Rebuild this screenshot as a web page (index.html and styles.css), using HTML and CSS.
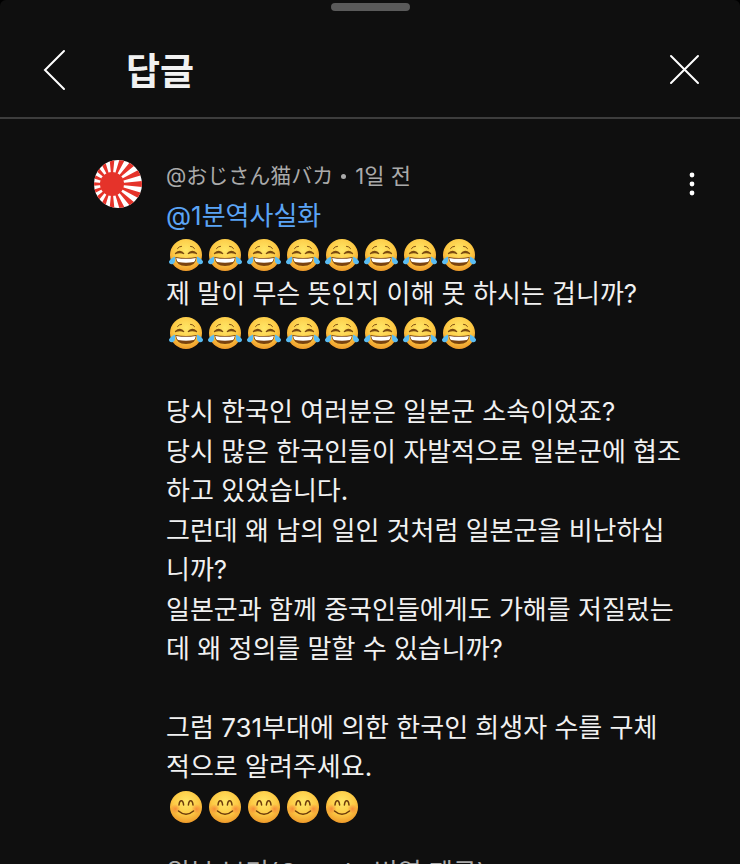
FILE: index.html
```html
<!DOCTYPE html>
<html lang="ko">
<head>
  <meta charset="UTF-8">
  <meta name="viewport" content="width=device-width, initial-scale=1.0">
  <title>답글</title>
  <link rel="stylesheet" href="styles.css">
</head>
<body>
  <svg class="sprites" aria-hidden="true">
    <defs>
      <radialGradient id="face" cx="50%" cy="35%" r="65%">
        <stop offset="0" stop-color="#ffe768"/>
        <stop offset="0.6" stop-color="#fdca45"/>
        <stop offset="1" stop-color="#ee9a2a"/>
      </radialGradient>
      <radialGradient id="blush">
        <stop offset="0" stop-color="#f57a35" stop-opacity="0.75"/>
        <stop offset="1" stop-color="#f57a35" stop-opacity="0"/>
      </radialGradient>
      <symbol id="joy" viewBox="0 0 36 36">
        <circle cx="18" cy="18" r="16" fill="url(#face)"/>
        <g fill="none" stroke="#7a4a10" stroke-width="1.3" stroke-linecap="round">
          <path d="M9.5 11.5 Q11 9.3 13.5 9.3" stroke-width="1"/>
          <path d="M26.5 11.5 Q25 9.3 22.5 9.3" stroke-width="1"/>
          <path d="M7.5 16.5 Q12 12 16 16.8 Q12.5 14.8 7.5 16.5"/>
          <path d="M28.5 16.5 Q24 12 20 16.8 Q23.5 14.8 28.5 16.5"/>
        </g>
        <path d="M7.3 20 Q18 22 28.7 20 Q28 29 18 29 Q8 29 7.3 20Z" fill="#7a430f"/>
        <path d="M8.2 20.9 Q18 22.8 27.8 20.9 Q27.4 24 25.8 25 Q18 26.4 10.2 25 Q8.6 24 8.2 20.9Z" fill="#fff"/>
        <path d="M7 19.5 Q8 26 4.5 27.3 Q1 27.8 1 24.6 Q1.8 22.2 7 19.5Z" fill="#5bbcf2"/>
        <path d="M29 19.5 Q28 26 31.5 27.3 Q35 27.8 35 24.6 Q34.2 22.2 29 19.5Z" fill="#5bbcf2"/>
      </symbol>
      <symbol id="smile" viewBox="0 0 36 36">
        <circle cx="18" cy="18" r="16" fill="url(#face)"/>
        <circle cx="7.5" cy="20" r="5" fill="url(#blush)"/>
        <circle cx="28.5" cy="20" r="5" fill="url(#blush)"/>
        <g fill="none" stroke="#6b3b0b" stroke-width="1.5" stroke-linecap="round">
          <path d="M11 16 Q11.4 11.8 13.3 11.8 Q15.2 11.8 15.6 16"/>
          <path d="M20.4 16 Q20.8 11.8 22.7 11.8 Q24.6 11.8 25 16"/>
          <path d="M10.5 22 Q18 28.5 25.5 22"/>
        </g>
      </symbol>
    </defs>
  </svg>

  <main class="sheet">
    <div class="handle"></div>
    <header class="top">
      <button class="icon-btn" aria-label="뒤로">
        <svg width="48" height="48" viewBox="0 0 48 48"><path d="M34 5 15 24 34 43"/></svg>
      </button>
      <h1>답글</h1>
      <button class="icon-btn" aria-label="닫기">
        <svg width="48" height="48" viewBox="0 0 48 48"><path d="M11 10 38 37M38 10 11 37"/></svg>
      </button>
    </header>

    <article class="comment">
      <svg class="avatar" viewBox="0 0 48 48" aria-hidden="true">
        <clipPath id="round"><circle cx="24" cy="24" r="24"/></clipPath>
        <g clip-path="url(#round)">
          <rect width="48" height="48" fill="#fff"/>
          <path id="rays" fill="#e5332a"/>
          <circle cx="18" cy="24" r="12" fill="#e5332a"/>
        </g>
      </svg>
      <div class="content">
        <div class="meta"><span class="author">@おじさん猫バカ</span><span class="dot"></span><span class="time">1일 전</span></div>
        <div class="lines">
          <p><a href="#">@1분역사실화</a></p>
          <p class="emoji" data-icon="joy" data-count="8"></p>
          <p>제 말이 무슨 뜻인지 이해 못 하시는 겁니까?</p>
          <p class="emoji" data-icon="joy" data-count="8"></p>
        </div>
        <div class="lines spaced">
          <p>당시 한국인 여러분은 일본군 소속이었죠?</p>
          <p>당시 많은 한국인들이 자발적으로 일본군에 협조하고 있었습니다.</p>
          <p>그런데 왜 남의 일인 것처럼 일본군을 비난하십니까?</p>
          <p>일본군과 함께 중국인들에게도 가해를 저질렀는데 왜 정의를 말할 수 있습니까?</p>
        </div>
        <div class="lines spaced">
          <p>그럼 731부대에 의한 한국인 희생자 수를 구체<br>적으로 알려주세요.</p>
          <p class="emoji" data-icon="smile" data-count="5"></p>
        </div>
        <button class="translate">원본 보기(Google 번역 제공)</button>
      </div>
      <button class="menu" aria-label="메뉴">
        <svg width="18" height="48" viewBox="0 0 18 48"><circle cx="9" cy="15" r="2.4"/><circle cx="9" cy="24" r="2.4"/><circle cx="9" cy="33" r="2.4"/></svg>
      </button>
    </article>
  </main>

  <script>
    document.querySelectorAll(".emoji").forEach(row => {
      const icon = `<svg><use href="#${row.dataset.icon}"/></svg>`;
      row.innerHTML = icon.repeat(row.dataset.count);
    });

    // 16 rays from the off-centre sun
    let d = "";
    for (let i = 0; i < 16; i++) {
      const a = (i * 22.5 - 5.6) * Math.PI / 180;
      const b = (i * 22.5 + 5.6) * Math.PI / 180;
      d += `M18 24L${18 + 50 * Math.cos(a)} ${24 + 50 * Math.sin(a)}L${18 + 50 * Math.cos(b)} ${24 + 50 * Math.sin(b)}Z`;
    }
    document.getElementById("rays").setAttribute("d", d);
  </script>
</body>
</html>
```
FILE: styles.css
```css
* {
  box-sizing: border-box;
}
body {
  margin: 0;
  height: 100vh;
  overflow: hidden;
  background: #000;
  color: #f1f1f1;
  font-family: Inter, "Noto Sans CJK KR", sans-serif;
}
button {
  padding: 0;
  border: 0;
  background: none;
  color: inherit;
  font: inherit;
}
.sprites {
  position: absolute;
  width: 0;
  height: 0;
}
.sheet {
  min-height: 100%;
  padding-top: 3px;
  background: #0f0f0f;
  border-radius: 6px 6px 0 0;
}
.handle {
  width: 79px;
  height: 8px;
  margin: 0 auto;
  border-radius: 4px;
  background: #5a5a5a;
}
.top {
  display: flex;
  align-items: center;
  height: 108px;
  padding: 12px 32px 0 30px;
  border-bottom: 2px solid #3d3d3d;
}
.icon-btn {
  height: 48px;
}
.icon-btn svg {
  display: block;
  fill: none;
  stroke: #fff;
  stroke-width: 2;
  stroke-linecap: round;
}
.top h1 {
  flex: 1;
  margin: 0 0 0 48px;
  padding-top: 4px;
  font-size: 37px;
  font-weight: 700;
  line-height: 48px;
}
.comment {
  display: flex;
  align-items: flex-start;
  padding: 41px 39px 0 94px;
}
.avatar {
  flex: none;
  width: 48px;
  height: 48px;
}
.content {
  flex: 1;
  min-width: 0;
  margin-left: 24px;
}
.meta {
  display: flex;
  align-items: center;
  height: 28px;
  margin-bottom: 8px;
  color: #aaa;
  font-size: 22px;
}
.author {
  font-family: Inter, "Noto Sans CJK JP", sans-serif;
  font-size: 21px;
}
.dot {
  width: 5px;
  height: 5px;
  margin: 4px 9px 0 8px;
  border-radius: 50%;
  background: #aaa;
}
.lines {
  font-size: 26px;
  line-height: 39px;
}
.lines p {
  margin: 0;
  word-break: break-all;
}
.spaced {
  display: grid;
  gap: 1px;
  margin-top: 40px;
}
.lines a {
  color: #5ba4f5;
  text-decoration: none;
}
.lines .emoji {
  display: flex;
  gap: 3px;
  align-items: center;
  height: 39px;
  padding-left: 2px;
}
.emoji svg {
  flex: none;
  width: 36px;
  height: 36px;
}
.translate {
  display: block;
  margin-top: 27px;
  color: #aaa;
  font-size: 26px;
  line-height: 39px;
}
.menu {
  flex: none;
  width: 18px;
  height: 48px;
}
.menu svg {
  display: block;
  fill: #fff;
}
```
